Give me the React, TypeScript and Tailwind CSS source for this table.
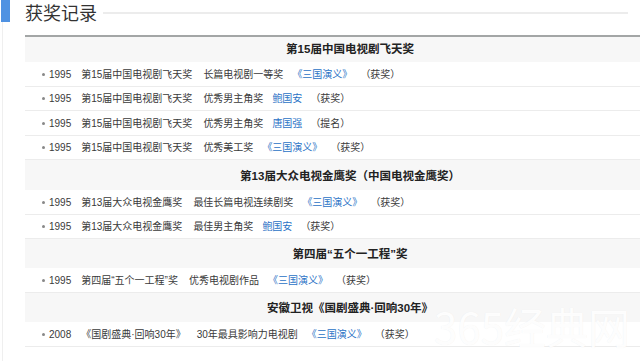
const sections = [
  {
    title: "第15届中国电视剧飞天奖",
    head: "h-[25px]",
    rows: [
      ["1995", "第15届中国电视剧飞天奖", "长篇电视剧一等奖", "《三国演义》", "（获奖）"],
      ["1995", "第15届中国电视剧飞天奖", "优秀男主角奖", "鲍国安", "（获奖）"],
      ["1995", "第15届中国电视剧飞天奖", "优秀男主角奖", "唐国强", "（提名）"],
      ["1995", "第15届中国电视剧飞天奖", "优秀美工奖", "《三国演义》", "（获奖）"],
    ],
  },
  {
    title: "第13届大众电视金鹰奖（中国电视金鹰奖）",
    head: "h-[30px] pt-[3px]",
    rows: [
      ["1995", "第13届大众电视金鹰奖", "最佳长篇电视连续剧奖", "《三国演义》", "（获奖）"],
      ["1995", "第13届大众电视金鹰奖", "最佳男主角奖", "鲍国安", "（获奖）"],
    ],
  },
  {
    title: "第四届“五个一工程”奖",
    head: "h-[29px] pt-[3px]",
    rows: [["1995", "第四届“五个一工程”奖", "优秀电视剧作品", "《三国演义》", "（获奖）"]],
  },
  {
    title: "安徽卫视《国剧盛典·回响30年》",
    head: "h-[29px] pt-[3px]",
    rows: [["2008", "《国剧盛典·回响30年》", "30年最具影响力电视剧", "《三国演义》", "（获奖）"]],
  },
];

export default function App() {
  return (
    <div className="relative h-[361px] w-[640px] overflow-hidden bg-white font-['Liberation_Sans','Noto_Sans_CJK_SC',sans-serif] text-[#333]">
      <div className="ml-[2px] h-full border-l border-[#efefef]">
        {/* heading */}
        <div className="flex h-[35px] items-start">
          <div className="-ml-[2px] h-[22px] w-[9px] bg-[#4f92e2]" />
          <h2 className="ml-[15px] mt-[3px] text-[18px] leading-[22px] font-normal text-[#333]">获奖记录</h2>
          <div className="ml-[6px] mr-[12px] mt-[12px] h-[2px] flex-1 bg-[#ececec]" />
        </div>

        {/* award table */}
        <div className="ml-[22px] w-[650px] border-t-2 border-[#a3a6a6]">
          {sections.map((s) => (
            <div key={s.title}>
              <div className={`${s.head} flex items-center justify-center bg-[#f7f7f7] text-[11.5px] font-bold text-[#222]`}>
                {s.title}
              </div>
              {s.rows.map((r, i) => (
                <div
                  key={i}
                  className={`${i % 2 === 0 ? "h-[25px]" : "h-[24px]"} flex items-center border-b border-[#ececec] pl-[17px] text-[10px] text-[#3a3a3a] whitespace-nowrap`}
                >
                  <span className="h-[3px] w-[3px] rounded-full bg-[#888]" />
                  <span className="ml-[4px]">{r[0]}</span>
                  <span className="ml-[10px]">{r[1]}</span>
                  <span className="ml-[11px]">{r[2]}</span>
                  <span className="ml-[9px] text-[#2a72c6]">{r[3]}</span>
                  <span className="ml-[8px]">{r[4]}</span>
                </div>
              ))}
            </div>
          ))}
        </div>
      </div>

      {/* watermark */}
      <div className="pointer-events-none absolute bottom-[14px] right-[10px] font-['Noto_Sans_CJK_SC',sans-serif] text-[42px] leading-none text-white/90 [text-shadow:0_0_1px_rgba(0,0,0,0.07)]">
        365经典网
      </div>
    </div>
  );
}
